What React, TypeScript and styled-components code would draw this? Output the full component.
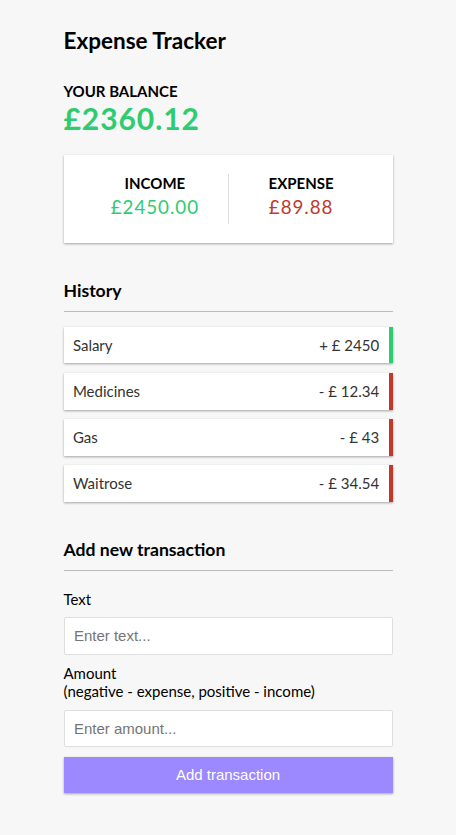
import styled, { createGlobalStyle } from "styled-components";

const GlobalStyle = createGlobalStyle`
  * {
    box-sizing: border-box;
  }
  body {
    margin: 0;
    background-color: #f7f7f7;
    font-family: "Lato", "Noto Sans", sans-serif;
  }
`;

const shadow = "0 1px 3px rgba(0, 0, 0, 0.12), 0 1px 2px rgba(0, 0, 0, 0.24)";

const Container = styled.div`
  width: 329px;
  margin: 0 auto;
  padding: 27px 0 28px;
  display: flex;
  flex-direction: column;
`;

const Title = styled.h2`
  margin: 0;
  font-size: 22.5px;
  line-height: 27px;
  font-weight: 700;
  color: #000;
`;

const BalanceLabel = styled.h4`
  margin: 28px 0 0;
  font-size: 15px;
  line-height: 18px;
  text-transform: uppercase;
  font-weight: 700;
`;

const BalanceAmount = styled.h1`
  margin: 0;
  font-size: 30px;
  line-height: 36px;
  letter-spacing: 0.94px;
  font-weight: 700;
  color: #2ecc71;
`;

const Card = styled.div`
  display: flex;
  margin-top: 19px;
  padding: 18.8px;
  background-color: #fff;
  box-shadow: ${shadow};
`;

const CardCol = styled.div<{ $divider?: boolean }>`
  flex: 1;
  text-align: center;
  border-right: ${(p) => (p.$divider ? "1px solid #dedede" : "none")};
`;

const CardLabel = styled.h4`
  margin: 0;
  font-size: 15px;
  line-height: 18px;
  text-transform: uppercase;
  font-weight: 700;
`;

const Money = styled.p<{ $type: "plus" | "minus" }>`
  margin: 4.7px 0;
  font-size: 18.8px;
  line-height: 22.6px;
  letter-spacing: 0.94px;
  color: ${(p) => (p.$type === "plus" ? "#2ecc71" : "#c0392b")};
`;

const SectionTitle = styled.h3<{ $after: number }>`
  margin: 37.6px 0 ${(p) => p.$after}px;
  padding-bottom: 9.4px;
  border-bottom: 1px solid #bbb;
  font-size: 17.6px;
  line-height: 21px;
  font-weight: 700;
`;

const List = styled.ul`
  list-style: none;
  margin: 0;
  padding: 0;
  display: flex;
  flex-direction: column;
  gap: 9.4px;
`;

const Item = styled.li<{ $type: "plus" | "minus" }>`
  display: flex;
  justify-content: space-between;
  padding: 9.4px;
  background-color: #fff;
  box-shadow: ${shadow};
  color: #333;
  font-size: 15px;
  line-height: 18px;
  border-right: 4.7px solid
    ${(p) => (p.$type === "plus" ? "#2ecc71" : "#c0392b")};
`;

const FormControl = styled.div`
  display: flex;
  flex-direction: column;
`;

const Label = styled.label`
  display: block;
  margin: 9.4px 0;
  font-size: 15px;
  line-height: 18px;
  color: #000;
`;

const Input = styled.input`
  display: block;
  width: 100%;
  padding: 9.4px;
  border: 1px solid #dedede;
  border-radius: 2px;
  font-family: "Liberation Sans", Arial, sans-serif;
  font-size: 15px;
  background: #fff;
  &::placeholder {
    color: #757575;
  }
`;

const Button = styled.button`
  display: block;
  width: 100%;
  margin: 9.4px 0 0;
  padding: 9.4px;
  border: 0;
  background-color: #9c88ff;
  box-shadow: ${shadow};
  color: #fff;
  font-family: "Liberation Sans", Arial, sans-serif;
  font-size: 15px;
  cursor: pointer;
`;

const transactions: { text: string; amount: string; type: "plus" | "minus" }[] = [
  { text: "Salary", amount: "+ £ 2450", type: "plus" },
  { text: "Medicines", amount: "- £ 12.34", type: "minus" },
  { text: "Gas", amount: "- £ 43", type: "minus" },
  { text: "Waitrose", amount: "- £ 34.54", type: "minus" },
];

const App: React.FC = () => {
  return (
    <>
      <GlobalStyle />
      <Container>
        <Title>Expense Tracker</Title>
        <BalanceLabel>Your Balance</BalanceLabel>
        <BalanceAmount>£2360.12</BalanceAmount>
        <Card>
          <CardCol $divider>
            <CardLabel>Income</CardLabel>
            <Money $type="plus">£2450.00</Money>
          </CardCol>
          <CardCol>
            <CardLabel>Expense</CardLabel>
            <Money $type="minus">£89.88</Money>
          </CardCol>
        </Card>

        <SectionTitle $after={15}>History</SectionTitle>
        <List>
          {transactions.map((t) => (
            <Item key={t.text} $type={t.type}>
              <span>{t.text}</span>
              <span>{t.amount}</span>
            </Item>
          ))}
        </List>

        <SectionTitle $after={9.4}>Add new transaction</SectionTitle>
        <form onSubmit={(e) => e.preventDefault()}>
          <FormControl>
            <Label htmlFor="text">Text</Label>
            <Input type="text" id="text" placeholder="Enter text..." />
          </FormControl>
          <FormControl>
            <Label htmlFor="amount">
              Amount <br />
              (negative - expense, positive - income)
            </Label>
            <Input type="text" id="amount" placeholder="Enter amount..." />
          </FormControl>
          <Button type="submit">Add transaction</Button>
        </form>
      </Container>
    </>
  );
};

export default App;
